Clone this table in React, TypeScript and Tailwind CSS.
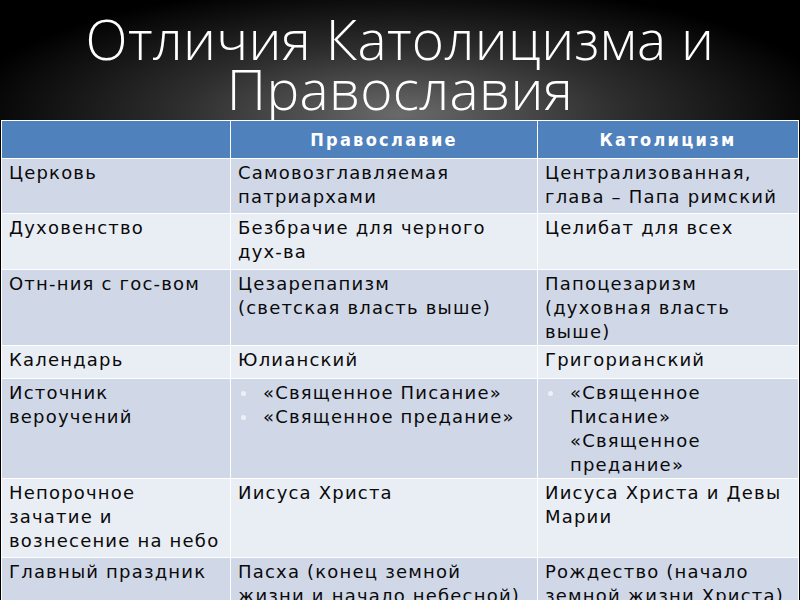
import React from 'react';

type Cell = { text?: string[]; bullets?: string[][] };

interface Row {
    label: string[];
    ortho: Cell;
    cath: Cell;
    h: string;
    dark: boolean;
}

const ROWS: Row[] = [
    { label: ['Церковь'], ortho: { text: ['Самовозглавляемая', 'патриархами'] }, cath: { text: ['Централизованная,', 'глава – Папа римский'] }, h: 'h-[55px]', dark: true },
    { label: ['Духовенство'], ortho: { text: ['Безбрачие для черного', 'дух-ва'] }, cath: { text: ['Целибат для всех'] }, h: 'h-[56px]', dark: false },
    { label: ['Отн-ния с гос-вом'], ortho: { text: ['Цезарепапизм', '(светская власть выше)'] }, cath: { text: ['Папоцезаризм', '(духовная власть', 'выше)'] }, h: 'h-[76px]', dark: true },
    { label: ['Календарь'], ortho: { text: ['Юлианский'] }, cath: { text: ['Григорианский'] }, h: 'h-[33px]', dark: false },
    {
        label: ['Источник', 'вероучений'],
        ortho: { bullets: [['«Священное Писание»'], ['«Священное предание»']] },
        cath: { bullets: [['«Священное', 'Писание»', '«Священное', 'предание»']] },
        h: 'h-[100px]',
        dark: true,
    },
    { label: ['Непорочное', 'зачатие и', 'вознесение на небо'], ortho: { text: ['Иисуса Христа'] }, cath: { text: ['Иисуса Христа и Девы', 'Марии'] }, h: 'h-[79px]', dark: false },
    { label: ['Главный праздник'], ortho: { text: ['Пасха (конец земной', 'жизни и начало небесной)'] }, cath: { text: ['Рождество (начало', 'земной жизни Христа)'] }, h: 'h-[60px]', dark: true },
];

const Lines = ({ lines }: { lines: string[] }) => (
    <>
        {lines.map((l, i) => (
            <div key={i} className="whitespace-nowrap">{l}</div>
        ))}
    </>
);

const CellBody = ({ cell }: { cell: Cell }) => {
    if (cell.bullets) {
        return (
            <div className="flex flex-col">
                {cell.bullets.map((item, i) => (
                    <div key={i} className="flex">
                        <span className="w-[25px] shrink-0 flex justify-start pl-[3px] pt-[10px]">
                            <span className="block w-[5px] h-[5px] rounded-full bg-[#eef1f7]" />
                        </span>
                        <div>
                            <Lines lines={item} />
                        </div>
                    </div>
                ))}
            </div>
        );
    }
    return <Lines lines={cell.text ?? []} />;
};

export default function App() {
    return (
        <div className="w-[800px] h-[600px] overflow-hidden bg-black flex flex-col font-['DejaVu_Sans',sans-serif]">
            {/* Title */}
            <div className="h-[120px] shrink-0 overflow-hidden bg-[radial-gradient(ellipse_55%_110%_at_50%_95%,#6a6a6a_0%,#2e2e2e_50%,#000_100%)]">
                <h1 className="pt-[14px] text-center text-white font-['Open_Sans',sans-serif] font-light text-[55px] leading-[50px] tracking-[0.3px]">
                    Отличия Католицизма и
                    <br />
                    Православия
                </h1>
            </div>

            {/* Table */}
            <table className="w-[798px] mx-[1px] border-collapse table-fixed text-[18px] leading-[24px] tracking-[1.2px] text-[#0a0a0a]">
                <colgroup>
                    <col className="w-[229px]" />
                    <col className="w-[307px]" />
                    <col />
                </colgroup>
                <thead>
                    <tr className="h-[38px] bg-[#4f81bd]">
                        <th className="border border-white" />
                        <th className="border border-white text-white font-bold text-[18px] tracking-[2.3px] font-['DejaVu_Sans_Condensed','DejaVu_Sans',sans-serif]">
                            Православие
                        </th>
                        <th className="border border-white text-white font-bold text-[18px] tracking-[2.3px] font-['DejaVu_Sans_Condensed','DejaVu_Sans',sans-serif]">
                            Католицизм
                        </th>
                    </tr>
                </thead>
                <tbody>
                    {ROWS.map((r, i) => (
                        <tr key={i} className={`${r.h} ${r.dark ? 'bg-[#d0d8e8]' : 'bg-[#e9edf4]'}`}>
                            <td className="border border-white align-top pl-[7px] pr-1 pt-[2px] overflow-hidden">
                                <Lines lines={r.label} />
                            </td>
                            <td className="border border-white align-top pl-[7px] pr-1 pt-[2px] overflow-hidden">
                                <CellBody cell={r.ortho} />
                            </td>
                            <td className="border border-white align-top pl-[7px] pr-1 pt-[2px] overflow-hidden">
                                <CellBody cell={r.cath} />
                            </td>
                        </tr>
                    ))}
                </tbody>
            </table>
        </div>
    );
}
